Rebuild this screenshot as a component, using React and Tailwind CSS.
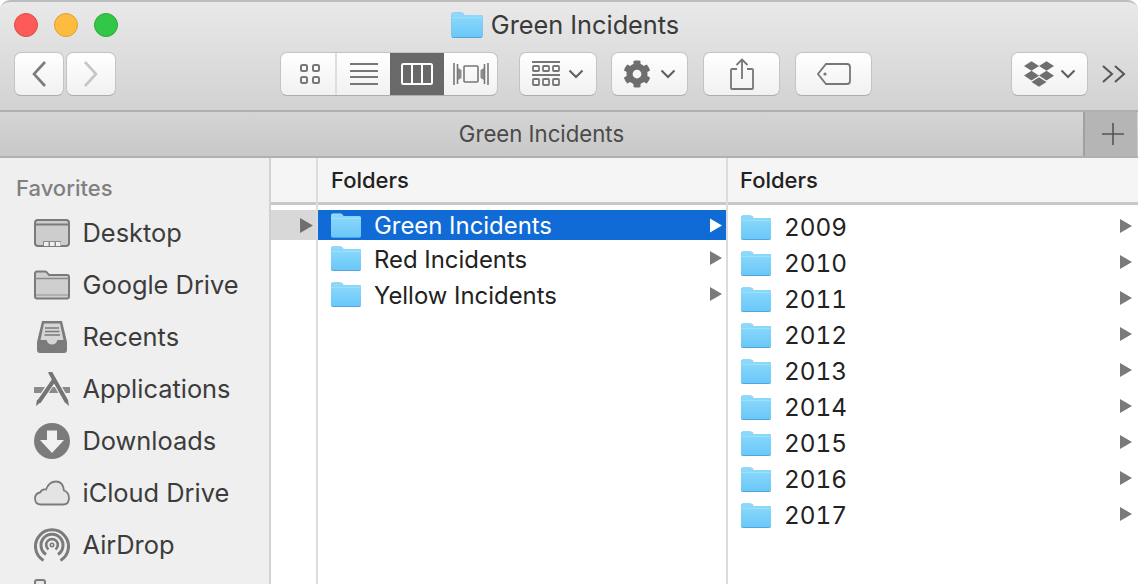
import { FaCog, FaDropbox } from "react-icons/fa";

const uiFont = { fontFamily: '"Inter", "Liberation Sans", sans-serif' };

const years = ["2009", "2010", "2011", "2012", "2013", "2014", "2015", "2016", "2017"];

function Folder({ className }) {
  return (
    <svg className={className} viewBox="0 0 30 25" aria-hidden="true">
      <defs>
        <linearGradient id="folderFill" x1="0" y1="0" x2="0" y2="1">
          <stop offset="0" stopColor="#8fdafb" />
          <stop offset="1" stopColor="#6ac8f9" />
        </linearGradient>
      </defs>
      <path d="M0 2.5 Q0 0.5 2 0.5 H9 Q10.5 0.5 11.5 1.5 L12.5 3 H28 Q30 3 30 5 V23 Q30 25 28 25 H2 Q0 25 0 23 Z" fill="#55a5d6" />
      <path d="M0 2.5 Q0 0.5 2 0.5 H9 Q10.5 0.5 11.5 1.5 L12.5 3 H28 Q30 3 30 5 V22.5 Q30 24 28 24 H2 Q0 24 0 22.5 Z" fill="url(#folderFill)" />
      <path d="M0 5.5 H30" stroke="#a5e2fc" strokeWidth="0.8" />
    </svg>
  );
}

function Arrow({ className }) {
  return (
    <svg className={className} viewBox="0 0 12 14" aria-hidden="true">
      <polygon points="0,0 12,7 0,14" fill="currentColor" />
    </svg>
  );
}

function Chevron() {
  return (
    <svg className="w-[16px] h-[10px]" viewBox="0 0 16 10" aria-hidden="true">
      <path d="M1.5 1.5 L8 8 L14.5 1.5" fill="none" stroke="#5f5f5f" strokeWidth="2" />
    </svg>
  );
}

function ToolButton({ className = "", children }) {
  return (
    <div className={`h-[44px] flex items-center justify-center rounded-[7px] border border-[#c4c4c4] border-b-[#adadad] bg-gradient-to-b from-white to-[#f1f1f1] ${className}`}>
      {children}
    </div>
  );
}

function SideItem({ icon, label }) {
  return (
    <div className="h-[52px] flex items-center pl-[34px] shrink-0">
      <div className="w-[36px] h-[36px] flex items-center justify-center shrink-0">{icon}</div>
      <span className="ml-[12.5px] text-[25.4px] text-[#3c3c3c] whitespace-nowrap">{label}</span>
    </div>
  );
}

const desktopIcon = (
  <svg className="w-[36px] h-[30px]" viewBox="0 0 36 30" aria-hidden="true">
    <rect x="1" y="2" width="34" height="26" rx="3" fill="#cdcdcd" stroke="#7a7a7a" strokeWidth="2" />
    <path d="M1 6.5 H35" stroke="#7a7a7a" strokeWidth="2" />
    <rect x="9" y="23" width="18" height="5" fill="#8a8a8a" />
    <rect x="10" y="24" width="4.5" height="4" fill="#f0f0f0" />
    <rect x="16" y="24" width="4.5" height="4" fill="#f0f0f0" />
    <rect x="22" y="24" width="4.5" height="4" fill="#f0f0f0" />
  </svg>
);

const driveIcon = (
  <svg className="w-[36px] h-[30px]" viewBox="0 0 36 30" aria-hidden="true">
    <path d="M1 4 Q1 1.5 3 1.5 H11 Q12.5 1.5 13.5 3 L15 5 H33 Q35 5 35 7 V26 Q35 28.5 33 28.5 H3 Q1 28.5 1 26 Z" fill="#cfcfcf" stroke="#7a7a7a" strokeWidth="2" />
    <path d="M1 8.5 H35" stroke="#8a8a8a" strokeWidth="1.5" />
    <path d="M2 25 H34" stroke="#b0b0b0" strokeWidth="2" />
  </svg>
);

const recentsIcon = (
  <svg className="w-[32px] h-[34px]" viewBox="0 0 32 34" aria-hidden="true">
    <path d="M6 1 H26 L31 22 V30 Q31 33 28 33 H4 Q1 33 1 30 V22 Z" fill="#7b7b7b" />
    <path d="M8 3.5 H24 L27.5 20 H21.5 Q20 24.5 16 24.5 Q12 24.5 10.5 20 H4.5 Z" fill="#d6d6d6" />
    <path d="M9 8 H23 M9 11.5 H23.5 M8.5 15 H24" stroke="#7b7b7b" strokeWidth="1.5" />
  </svg>
);

const appsIcon = (
  <svg className="w-[36px] h-[34px]" viewBox="0 0 36 34" aria-hidden="true">
    <path d="M0 15 H36 V21 H0 Z" fill="#8a8a8a" />
    <path d="M16.5 1 L33 30 M20 7 L5 30" fill="none" stroke="#efefef" strokeWidth="6.5" />
    <path d="M16.5 1 L32 28.5" fill="none" stroke="#747474" strokeWidth="4" strokeLinecap="round" />
    <path d="M20 8 L5.5 29" fill="none" stroke="#747474" strokeWidth="4" strokeLinecap="round" />
    <path d="M2 34 L3 27.5 L7 30 Z M35 34 L30.5 30 L34 28 Z" fill="#747474" />
  </svg>
);

const downloadIcon = (
  <svg className="w-[36px] h-[36px]" viewBox="0 0 36 36" aria-hidden="true">
    <circle cx="18" cy="18" r="18" fill="#7b7b7b" />
    <path d="M13 7.5 H23 V17 H30 L18 30 L6 17 H13 Z" fill="#f0f0f0" />
  </svg>
);

const cloudIcon = (
  <svg className="w-[36px] h-[26px]" viewBox="0 0 36 26" aria-hidden="true">
    <path d="M7 24.5 Q1 24.5 1 18.5 Q1 13.5 6 12.5 Q8 8.5 12 9.5 Q15 1.5 22 1.5 Q29 1.5 30 10.5 Q35 12.5 35 18 Q35 24.5 29 24.5 Z" fill="#e4e4e4" stroke="#7b7b7b" strokeWidth="1.8" />
  </svg>
);

const airdropIcon = (
  <svg className="w-[36px] h-[36px]" viewBox="0 0 36 36" fill="none" stroke="#7b7b7b" aria-hidden="true">
    <path d="M9.5 33.5 A16.5 16.5 0 1 1 26.5 33.5" strokeWidth="3" />
    <path d="M12 27.5 A11 11 0 1 1 24 27.5" strokeWidth="3" />
    <path d="M14.5 22.5 A5.8 5.8 0 1 1 21.5 22.5" strokeWidth="2.6" />
    <circle cx="18" cy="18" r="1.7" strokeWidth="1.6" />
  </svg>
);

const partialIcon = (
  <svg className="w-[36px] h-[36px]" viewBox="0 0 36 36" aria-hidden="true">
    <path d="M1 34 V3 Q1 1 3 1 H9 Q11 1 11 3 V34" fill="#e8e8e8" stroke="#7b7b7b" strokeWidth="2" />
  </svg>
);

export default function App() {
  return (
    <div className="w-[1138px] h-[584px] overflow-hidden bg-white flex flex-col" style={uiFont}>
      {/* toolbar */}
      <div className="h-[112px] shrink-0 rounded-t-[10px] border-t-2 border-[#bdbdbd] border-b-2 border-b-[#b0b0b0] bg-gradient-to-b from-[#e9e9e9] to-[#d2d2d2]">
        <div className="h-[50px] grid grid-cols-[1fr_auto_1fr] items-center px-[14px] pb-[4px]">
          <div className="flex gap-[16px]">
            <div className="w-[24px] h-[24px] rounded-full bg-[#fc5b57] border border-[#e14942]" />
            <div className="w-[24px] h-[24px] rounded-full bg-[#fdbc40] border border-[#de9f34]" />
            <div className="w-[24px] h-[24px] rounded-full bg-[#33c748] border border-[#27aa35]" />
          </div>
          <div className="flex items-center gap-[8px] pr-[8px]">
            <Folder className="w-[32px] h-[26px]" />
            <span className="text-[25.3px] leading-[30px] text-[#3a3a3a]">Green Incidents</span>
          </div>
          <div />
        </div>

        <div className="flex items-center pl-[14px]">
          <ToolButton className="w-[50px]">
            <svg className="w-[16px] h-[28px]" viewBox="0 0 16 28" aria-hidden="true">
              <path d="M14 2 L3 14 L14 26" fill="none" stroke="#7c7c7c" strokeWidth="2.6" />
            </svg>
          </ToolButton>
          <ToolButton className="w-[50px] ml-[2px]">
            <svg className="w-[16px] h-[28px]" viewBox="0 0 16 28" aria-hidden="true">
              <path d="M2 2 L13 14 L2 26" fill="none" stroke="#c6c6c6" strokeWidth="2.6" />
            </svg>
          </ToolButton>

          <div className="ml-[164px] w-[218px] h-[44px] flex rounded-[7px] border border-[#c4c4c4] border-b-[#adadad] bg-gradient-to-b from-white to-[#f1f1f1] overflow-hidden">
            <div className="w-[56px] flex items-center justify-center border-r-2 border-[#dedede]">
              <svg className="w-[20px] h-[20px] ml-[3px]" viewBox="0 0 20 20" fill="none" stroke="#777" strokeWidth="2" aria-hidden="true">
                <rect x="1" y="1" width="6" height="6" rx="1.5" />
                <rect x="13" y="1" width="6" height="6" rx="1.5" />
                <rect x="1" y="13" width="6" height="6" rx="1.5" />
                <rect x="13" y="13" width="6" height="6" rx="1.5" />
              </svg>
            </div>
            <div className="w-[53px] flex items-center justify-center">
              <svg className="w-[30px] h-[22px]" viewBox="0 0 30 22" stroke="#777" strokeWidth="2" aria-hidden="true">
                <path d="M1 1 H29 M1 8 H29 M1 14 H29 M1 21 H29" />
              </svg>
            </div>
            <div className="w-[54px] flex items-center justify-center bg-[#696969]">
              <svg className="w-[32px] h-[22px]" viewBox="0 0 32 22" fill="none" stroke="#fff" strokeWidth="2" aria-hidden="true">
                <rect x="1" y="1" width="30" height="20" rx="1.5" />
                <path d="M11 1 V21 M21 1 V21" />
              </svg>
            </div>
            <div className="flex-1 flex items-center justify-center">
              <svg className="w-[36px] h-[24px]" viewBox="0 0 36 24" fill="none" stroke="#777" strokeWidth="1.6" aria-hidden="true">
                <path d="M1 1 V23 M35 1 V23 M4.5 2 V22 M31.5 2 V22" />
                <path d="M5 6 L8.5 8 V16 L5 18 Z M31 6 L27.5 8 V16 L31 18 Z" fill="#8a8a8a" stroke="none" />
                <rect x="11" y="4" width="14" height="16" rx="1" />
              </svg>
            </div>
          </div>

          <ToolButton className="w-[78px] ml-[21px] gap-[8px]">
            <svg className="w-[28px] h-[26px]" viewBox="0 0 28 26" fill="none" stroke="#777" strokeWidth="1.8" aria-hidden="true">
              <path d="M0 1 H28 M0 14 H28" />
              <rect x="1" y="5" width="6" height="5" rx="0.8" />
              <rect x="11" y="5" width="6" height="5" rx="0.8" />
              <rect x="21" y="5" width="6" height="5" rx="0.8" />
              <rect x="1" y="18" width="6" height="6" rx="0.8" />
              <rect x="11" y="18" width="6" height="6" rx="0.8" />
              <rect x="21" y="18" width="6" height="6" rx="0.8" />
            </svg>
            <Chevron />
          </ToolButton>

          <ToolButton className="w-[77px] ml-[14px] gap-[9px]">
            <FaCog className="w-[28px] h-[28px] text-[#6e6e6e]" />
            <Chevron />
          </ToolButton>

          <ToolButton className="w-[77px] ml-[15px]">
            <svg className="w-[24px] h-[32px]" viewBox="0 0 24 32" fill="none" stroke="#777" strokeWidth="1.8" aria-hidden="true">
              <path d="M7 11 H2 Q1 11 1 12 V30 Q1 31 2 31 H22 Q23 31 23 30 V12 Q23 11 22 11 H17" />
              <path d="M12 21 V2 M6.5 7 L12 1.5 L17.5 7" />
            </svg>
          </ToolButton>

          <ToolButton className="w-[77px] ml-[15px]">
            <svg className="w-[34px] h-[22px]" viewBox="0 0 34 22" fill="none" stroke="#777" strokeWidth="1.8" aria-hidden="true">
              <path d="M9 1 H30 Q33 1 33 4 V18 Q33 21 30 21 H9 L1 11 Z" />
              <circle cx="8" cy="11" r="1.6" fill="#777" stroke="none" />
            </svg>
          </ToolButton>

          <ToolButton className="w-[77px] ml-[139px] gap-[6px]">
            <FaDropbox className="w-[30px] h-[30px] text-[#6e6e6e]" />
            <Chevron />
          </ToolButton>

          <svg className="w-[24px] h-[18px] ml-[14px]" viewBox="0 0 24 18" fill="none" stroke="#555" strokeWidth="2" aria-hidden="true">
            <path d="M1 1 L10 9 L1 17 M13 1 L22 9 L13 17" />
          </svg>
        </div>
      </div>

      {/* tab bar */}
      <div className="h-[46px] shrink-0 flex border-b-2 border-[#b0b0b0] bg-gradient-to-b from-[#d5d5d5] to-[#c8c8c8]">
        <div className="flex-1 flex items-center justify-center text-[22.2px] text-[#4a4a4a]">Green Incidents</div>
        <div className="w-[54px] mr-[1px] pl-[3px] flex items-center justify-center bg-[#b5b5b5] border-l-2 border-[#a0a0a0]">
          <svg className="w-[22px] h-[22px]" viewBox="0 0 22 22" stroke="#555" strokeWidth="1.6" aria-hidden="true">
            <path d="M0 11 H22 M11 0 V22" />
          </svg>
        </div>
      </div>

      <div className="flex-1 flex min-h-0">
        {/* sidebar */}
        <div className="w-[271px] shrink-0 bg-[#efefef] border-r-2 border-[#d2d2d2] overflow-hidden flex flex-col">
          <div className="h-[49px] shrink-0 pl-[16px] pt-[17px] text-[22px] leading-[26px] font-medium text-[#808080]">Favorites</div>
          <SideItem icon={desktopIcon} label="Desktop" />
          <SideItem icon={driveIcon} label="Google Drive" />
          <SideItem icon={recentsIcon} label="Recents" />
          <SideItem icon={appsIcon} label="Applications" />
          <SideItem icon={downloadIcon} label="Downloads" />
          <SideItem icon={cloudIcon} label="iCloud Drive" />
          <SideItem icon={airdropIcon} label="AirDrop" />
          <SideItem icon={partialIcon} label="" />
        </div>

        {/* narrow first column */}
        <div className="w-[47px] shrink-0 border-r-2 border-[#dcdcdc] flex flex-col">
          <div className="h-[47px] shrink-0 bg-[#f5f5f5] border-b-[3px] border-[#c8c8c8]" />
          <div className="h-[30px] mt-[5px] bg-[#d8d8d8] flex items-center justify-end pr-[3px] text-[#6f6f6f]">
            <Arrow className="w-[13px] h-[15px]" />
          </div>
        </div>

        {/* second column */}
        <div className="w-[410px] shrink-0 border-r-2 border-[#dcdcdc] flex flex-col">
          <div className="h-[47px] shrink-0 bg-[#f5f5f5] border-b-[3px] border-[#c8c8c8] pl-[13px] flex items-center text-[22px] font-medium text-[#222]">
            <span>Folders</span>
          </div>
          <div className="h-[30px] mt-[5px] mb-[2px] bg-[#116bd6] flex items-center pl-[13px] pr-[4px] text-white">
            <Folder className="w-[30px] h-[25px]" />
            <span className="ml-[13px] mt-[1px] text-[23.9px] flex-1">Green Incidents</span>
            <Arrow className="w-[12px] h-[15px]" />
          </div>
          {["Red Incidents", "Yellow Incidents"].map((name) => (
            <div key={name} className="h-[36px] flex items-center pl-[13px] pr-[4px]">
              <Folder className="w-[30px] h-[25px] -mt-[4px]" />
              <span className="ml-[13px] text-[23.9px] flex-1 text-[#222]">{name}</span>
              <Arrow className="w-[12px] h-[14px] -mt-[4px] text-[#7a7a7a]" />
            </div>
          ))}
        </div>

        {/* third column */}
        <div className="flex-1 flex flex-col">
          <div className="h-[47px] shrink-0 bg-[#f5f5f5] border-b-[3px] border-[#c8c8c8] pl-[12px] flex items-center text-[22px] font-medium text-[#222]">
            <span>Folders</span>
          </div>
          <div className="pt-[5px]">
            {years.map((year) => (
              <div key={year} className="h-[36px] flex items-center pl-[13px] pr-[6px]">
                <Folder className="w-[30px] h-[25px] -mt-[2px]" />
                <span className="ml-[13px] -mt-[1px] text-[24.3px] tabular-nums flex-1 text-[#222]">{year}</span>
                <Arrow className="w-[12px] h-[14px] -mt-[5px] text-[#7a7a7a]" />
              </div>
            ))}
          </div>
        </div>
      </div>
    </div>
  );
}
